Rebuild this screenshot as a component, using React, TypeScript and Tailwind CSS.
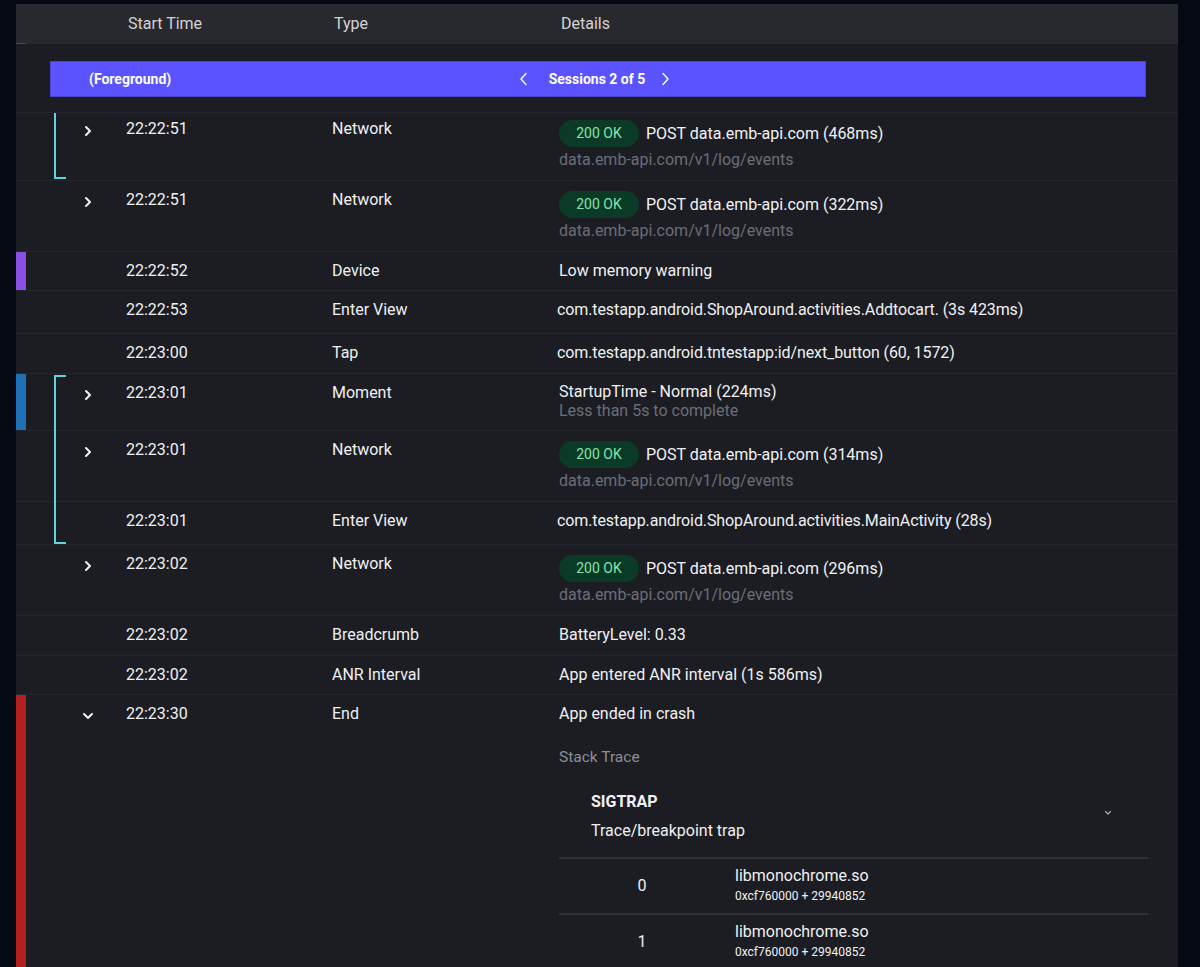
import React from "react";

const ChevRight = () => (
  <svg width="12" height="12" viewBox="0 0 12 12" fill="none">
    <polyline points="4,2 8,6 4,10" stroke="#f2f2f2" strokeWidth="2" strokeLinecap="round" strokeLinejoin="round" />
  </svg>
);

const ChevDown = () => (
  <svg width="12" height="12" viewBox="0 0 12 12" fill="none">
    <polyline points="2,4 6,8 10,4" stroke="#f2f2f2" strokeWidth="2" strokeLinecap="round" strokeLinejoin="round" />
  </svg>
);

type RowProps = {
  bar?: string;
  exp?: "right" | "down";
  time: string;
  type: string;
  h: string;
  first?: boolean;
  children: React.ReactNode;
};

function Row({ bar, exp, time, type, h, first, children }: RowProps) {
  return (
    <div className={`border-t border-[#25272d] overflow-hidden ${h}`}>
      <div className={`flex h-full ${first ? "-mt-[3px]" : ""}`}>
        <div className={`w-[10px] shrink-0 ${bar ?? ""}`} />
        <div className="w-[56px] shrink-0" />
        <div className="w-[44px] shrink-0 pt-[15px]">
          {exp === "right" && <ChevRight />}
          {exp === "down" && <ChevDown />}
        </div>
        <div className="w-[206px] shrink-0 pt-[8px] leading-[22px] text-[16px] text-[#f0f0f2]">{time}</div>
        <div className="w-[227px] shrink-0 pt-[8px] leading-[22px] text-[16px] text-[#f0f0f2]">{type}</div>
        <div className="flex-1 min-w-0">{children}</div>
      </div>
    </div>
  );
}

function Simple({ text, shift }: { text: string; shift?: boolean }) {
  return (
    <div className={`pt-[8px] leading-[22px] text-[16px] text-[#f0f0f2] whitespace-nowrap ${shift ? "-ml-[2px] tracking-[-0.1px]" : ""}`}>
      {text}
    </div>
  );
}

function Net({ text }: { text: string }) {
  return (
    <div className="pt-[10px]">
      <div className="flex items-center">
        <span className="h-[27px] w-[80px] rounded-full bg-[#0b3a26] text-[#86e2ad] text-[14px] flex items-center justify-center">
          200 OK
        </span>
        <span className="ml-[7px] text-[16px] text-[#f2f2f4] whitespace-nowrap">{text}</span>
      </div>
      <div className="mt-[2px] leading-[22px] text-[16px] text-[#6b6e76]">data.emb-api.com/v1/log/events</div>
    </div>
  );
}

function Frame({ idx }: { idx: string }) {
  return (
    <div className="flex h-[56px] border-t-2 border-[#2e3036]">
      <div className="w-[166px] shrink-0 flex items-center justify-center text-[16px] text-[#f0f0f2]">{idx}</div>
      <div className="pl-[10px] pt-[7px]">
        <div className="leading-[20px] text-[16px] text-[#f0f0f2]">libmonochrome.so</div>
        <div className="mt-[2px] leading-[16px] text-[12px] text-[#f0f0f2]">0xcf760000 + 29940852</div>
      </div>
    </div>
  );
}

export default function App() {
  return (
    <div className="h-[967px] w-full overflow-hidden bg-[#050914] font-['Roboto',sans-serif]">
      <div className="ml-[16px] mt-[4px] w-[1162px] bg-[#1b1d23] min-h-[963px]">
        {/* header */}
        <div className="relative flex h-[40px] items-center bg-[#28292e] text-[16px] text-[#d3d3d6]">
          <div className="w-[112px] shrink-0" />
          <div className="w-[206px] shrink-0">Start Time</div>
          <div className="w-[227px] shrink-0">Type</div>
          <div>Details</div>
          <div className="absolute bottom-0 left-0 h-[1px] w-[10px] bg-[#b3201f]" />
        </div>

        {/* session bar */}
        <div className="pt-[17px] pb-[15px] pl-[34px]">
          <div className="grid h-[36px] w-[1096px] grid-cols-[1fr_auto_1fr] items-center border border-[#4a44cc] bg-[#5b53ff] text-[14px] font-bold text-white">
            <div className="pl-[38px]">(Foreground)</div>
            <div className="flex items-center mr-[7px]">
              <svg width="10" height="14" viewBox="0 0 10 14" fill="none">
                <polyline points="7,1.5 2,7 7,12.5" stroke="#fff" strokeWidth="1.4" strokeLinecap="round" strokeLinejoin="round" />
              </svg>
              <span className="ml-[20px] mr-[15px]">Sessions 2 of 5</span>
              <svg width="10" height="14" viewBox="0 0 10 14" fill="none">
                <polyline points="3,1.5 8,7 3,12.5" stroke="#fff" strokeWidth="1.4" strokeLinecap="round" strokeLinejoin="round" />
              </svg>
            </div>
            <div />
          </div>
        </div>

        {/* rows */}
        <div className="relative">
          <div className="absolute left-[38px] top-[1px] h-[66px] w-[12px] border-l-2 border-b-2 border-[#62d2dc]" />
          <div className="absolute left-[38px] top-[263px] h-[169px] w-[12px] border-l-2 border-t-2 border-b-2 border-[#62d2dc]" />

          <Row first exp="right" time="22:22:51" type="Network" h="h-[68px]">
            <Net text="POST data.emb-api.com (468ms)" />
          </Row>
          <Row exp="right" time="22:22:51" type="Network" h="h-[71px]">
            <Net text="POST data.emb-api.com (322ms)" />
          </Row>
          <Row bar="bg-[#8c4fe6]" time="22:22:52" type="Device" h="h-[39px]">
            <Simple text="Low memory warning" />
          </Row>
          <Row time="22:22:53" type="Enter View" h="h-[43px]">
            <Simple shift text="com.testapp.android.ShopAround.activities.Addtocart. (3s 423ms)" />
          </Row>
          <Row time="22:23:00" type="Tap" h="h-[40px]">
            <Simple shift text="com.testapp.android.tntestapp:id/next_button (60, 1572)" />
          </Row>
          <Row bar="bg-[#1f70b5]" exp="right" time="22:23:01" type="Moment" h="h-[57px]">
            <div className="pt-[8px]">
              <div className="leading-[20px] text-[16px] text-[#f0f0f2]">StartupTime - Normal (224ms)</div>
              <div className="leading-[18px] text-[16px] text-[#6b6e76]">Less than 5s to complete</div>
            </div>
          </Row>
          <Row exp="right" time="22:23:01" type="Network" h="h-[71px]">
            <Net text="POST data.emb-api.com (314ms)" />
          </Row>
          <Row time="22:23:01" type="Enter View" h="h-[43px]">
            <Simple shift text="com.testapp.android.ShopAround.activities.MainActivity (28s)" />
          </Row>
          <Row exp="right" time="22:23:02" type="Network" h="h-[71px]">
            <Net text="POST data.emb-api.com (296ms)" />
          </Row>
          <Row time="22:23:02" type="Breadcrumb" h="h-[40px]">
            <Simple text="BatteryLevel: 0.33" />
          </Row>
          <Row time="22:23:02" type="ANR Interval" h="h-[39px]">
            <Simple text="App entered ANR interval (1s 586ms)" />
          </Row>
          <Row bar="bg-[#b3201f]" exp="down" time="22:23:30" type="End" h="h-[300px]">
            <div className="pt-[8px]">
              <div className="leading-[22px] text-[16px] text-[#f0f0f2]">App ended in crash</div>
              <div className="mt-[21px] leading-[22px] text-[15.5px] text-[#8d9096]">Stack Trace</div>
              <div className="w-[589px]">
                <div className="flex items-center justify-between pl-[32px] pr-[36px] pt-[23px] pb-[15px]">
                  <div>
                    <div className="leading-[22px] text-[16px] font-bold text-[#f2f2f4]">SIGTRAP</div>
                    <div className="mt-[7px] leading-[22px] text-[16px] text-[#f0f0f2]">Trace/breakpoint trap</div>
                  </div>
                  <svg className="-mt-[8px]" width="8" height="6" viewBox="0 0 8 6" fill="none">
                    <polyline points="1.5,1.5 4,4 6.5,1.5" stroke="#a8aab0" strokeWidth="1.2" strokeLinecap="round" strokeLinejoin="round" />
                  </svg>
                </div>
                <Frame idx="0" />
                <Frame idx="1" />
              </div>
            </div>
          </Row>
        </div>
      </div>
    </div>
  );
}
